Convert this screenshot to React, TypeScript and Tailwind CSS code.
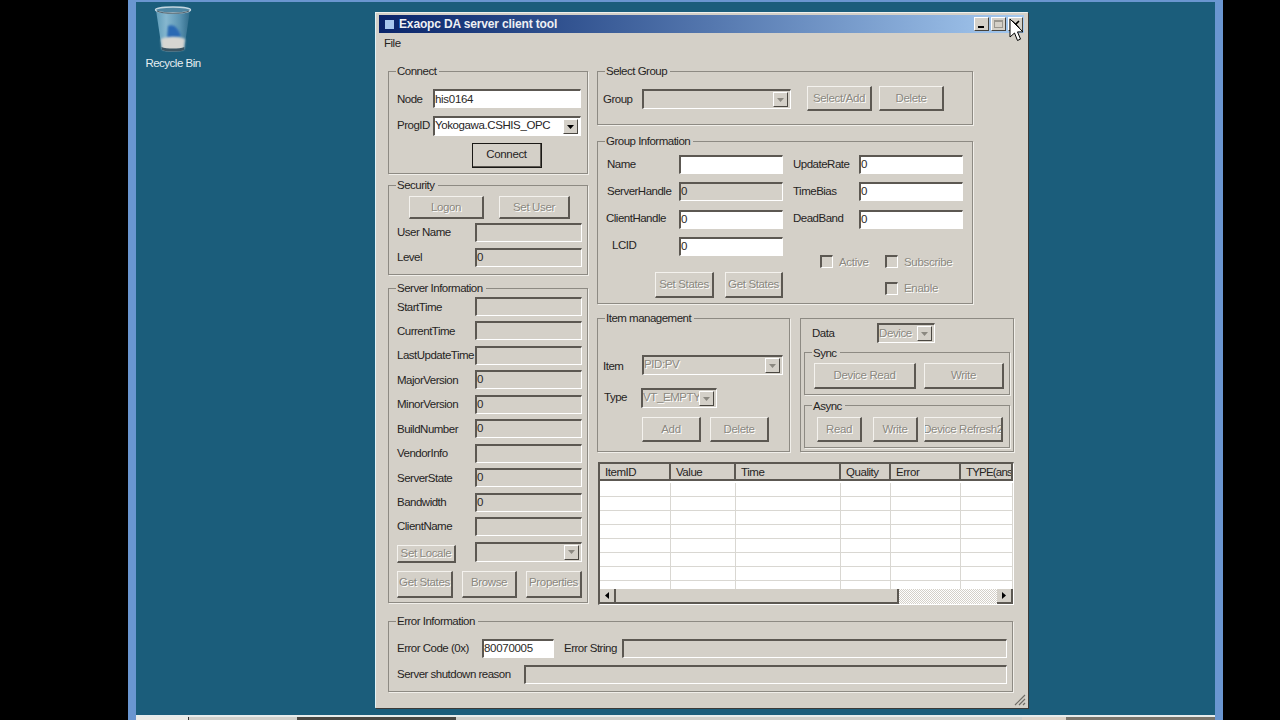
import React from 'react';

const FONT = "font-['Liberation_Sans',Arial,sans-serif]";
const DOWN = 'border-t-2 border-l-2 border-t-[#5c5852] border-l-[#5c5852] border-r border-b border-r-white border-b-white';

function Label({ children, className = '' }: { children: React.ReactNode; className?: string }) {
  return <span className={`text-[11.5px] leading-[14px] tracking-[-0.5px] text-[#26241f] whitespace-nowrap ${className}`}>{children}</span>;
}

function Input({ value = '', off = false, className = '' }: { value?: string; off?: boolean; className?: string }) {
  return (
    <div className={`h-[19px] text-[11.5px] leading-[15px] tracking-[-0.3px] text-[#2b2925] overflow-hidden whitespace-nowrap ${DOWN} ${off ? 'bg-[#d4d0c8]' : 'bg-white'} ${className}`}>
      {value}
    </div>
  );
}

function Arrow({ off = false }: { off?: boolean }) {
  return (
    <div className="absolute right-[2px] top-[1px] bottom-[1px] w-[15px] flex items-center justify-center bg-[#d4d0c8] border-t border-l border-t-white border-l-white border-r border-b border-r-[#4a4741] border-b-[#4a4741]">
      <svg width="7" height="4" viewBox="0 0 7 4"><path d="M0 0h7L3.5 4z" fill={off ? '#8b8880' : '#000'} /></svg>
    </div>
  );
}

function Select({ value = '', off = false, className = '' }: { value?: string; off?: boolean; className?: string }) {
  return (
    <div className={`relative h-[20px] text-[11.5px] leading-[15px] tracking-[-0.4px] overflow-hidden whitespace-nowrap ${DOWN} ${off ? 'bg-[#d4d0c8] text-[#8b8880] [text-shadow:1px_1px_0_#fff]' : 'bg-white text-[#26241f]'} ${className}`}>
      {value}
      <Arrow off={off} />
    </div>
  );
}

function Btn({ children, off = true, className = '' }: { children: React.ReactNode; off?: boolean; className?: string }) {
  return (
    <div className={`flex items-center justify-center overflow-hidden whitespace-nowrap text-[11.5px] tracking-[-0.35px] bg-[#d4d0c8] border-t border-l border-t-[#f4f2ee] border-l-[#f4f2ee] border-r-2 border-b-2 border-r-[#5c5852] border-b-[#5c5852] ${off ? 'text-[#8b8880] [text-shadow:1px_1px_0_#fff]' : 'text-[#26241f]'} ${className}`}>
      {children}
    </div>
  );
}

function Group({ title, titleTop = '-top-[8px]', className = '', children }: { title?: string; titleTop?: string; className?: string; children: React.ReactNode }) {
  return (
    <div className={`relative border border-[#8d8a83] shadow-[1px_1px_0_#f1efea] ${className}`}>
      {title && <span className={`absolute ${titleTop} left-[7px] px-[1px] pr-[3px] bg-[#d4d0c8] text-[11.5px] leading-[14px] tracking-[-0.5px] text-[#26241f] whitespace-nowrap`}>{title}</span>}
      {children}
    </div>
  );
}

function Check({ label, className = '' }: { label: string; className?: string }) {
  return (
    <div className={`flex items-center gap-[6px] ${className}`}>
      <div className={`w-[13px] h-[13px] bg-[#d4d0c8] ${DOWN}`} />
      <span className="text-[11.5px] leading-[14px] tracking-[-0.3px] text-[#8b8880] [text-shadow:1px_1px_0_#fff]">{label}</span>
    </div>
  );
}

const serverRows = [
  ['StartTime', ''],
  ['CurrentTime', ''],
  ['LastUpdateTime', ''],
  ['MajorVersion', '0'],
  ['MinorVersion', '0'],
  ['BuildNumber', '0'],
  ['VendorInfo', ''],
  ['ServerState', '0'],
  ['Bandwidth', '0'],
  ['ClientName', ''],
];

const columns = [
  { name: 'ItemID', w: 'w-[71px]', track: 'tracking-[-0.45px]' },
  { name: 'Value', w: 'w-[65px]', track: 'tracking-[-0.45px]' },
  { name: 'Time', w: 'w-[105px]', track: 'tracking-[-0.45px]' },
  { name: 'Quality', w: 'w-[50px]', track: 'tracking-[-0.45px]' },
  { name: 'Error', w: 'w-[70px]', track: 'tracking-[-0.45px]' },
  { name: 'TYPE(ans', w: 'flex-1', track: 'tracking-[-0.8px]' },
];

function ItemTable() {
  return (
    <div className={`ml-[1px] mt-[10px] w-[416px] h-[143px] flex flex-col overflow-hidden bg-white ${DOWN}`}>
      <div className="flex h-[17px] shrink-0 border-b-2 border-b-[#5c5852]">
        {columns.map((c) => (
          <div key={c.name} className={`${c.w} ${c.track} bg-[#d4d0c8] pl-[5px] text-[11.5px] leading-[16px] text-[#26241f] border-r-2 border-r-[#5c5852] overflow-hidden whitespace-nowrap`}>
            {c.name}
          </div>
        ))}
      </div>
      <div className="flex-1 overflow-hidden pt-[2px]">
        {[0, 1, 2, 3, 4, 5, 6, 7].map((r) => (
          <div key={r} className="flex h-[14px] border-b border-b-[#d9d7d2]">
            {columns.map((c) => (
              <div key={c.name} className={`${c.w} border-r border-r-[#d9d7d2]`} />
            ))}
          </div>
        ))}
      </div>
      <div className="flex h-[15px] shrink-0">
        <div className="w-[16px] flex items-center justify-center bg-[#d4d0c8] border-r-2 border-b-2 border-r-[#5c5852] border-b-[#5c5852]">
          <svg width="4" height="7" viewBox="0 0 4 7"><path d="M4 0v7L0 3.5z" fill="#000" /></svg>
        </div>
        <div className="w-[283px] bg-[#d4d0c8] border-r-2 border-b-2 border-r-[#5c5852] border-b-[#5c5852]" />
        <div className="flex-1 bg-[repeating-conic-gradient(#ffffff_0_25%,#d4d0c8_0_50%)] bg-[length:2px_2px]" />
        <div className="w-[16px] flex items-center justify-center bg-[#d4d0c8] border-r-2 border-b-2 border-r-[#5c5852] border-b-[#5c5852]">
          <svg width="4" height="7" viewBox="0 0 4 7"><path d="M0 0v7l4-3.5z" fill="#000" /></svg>
        </div>
      </div>
    </div>
  );
}

function RecycleBin() {
  return (
    <div className="absolute left-[146px] top-[6px] w-[54px] flex flex-col items-center">
      <svg width="38" height="46" viewBox="0 0 38 46">
        <defs>
          <linearGradient id="bin" x1="0" x2="1" y1="0" y2="0">
            <stop offset="0" stopColor="#5f9cb8" />
            <stop offset="0.3" stopColor="#86b7cf" />
            <stop offset="0.7" stopColor="#5b94b2" />
            <stop offset="1" stopColor="#2f6a88" />
          </linearGradient>
          <filter id="soft"><feGaussianBlur stdDeviation="1" /></filter>
        </defs>
        <path d="M2 4 8 44c3 2 19 2 22 0L36 4z" fill="url(#bin)" />
        <path d="M14 20c5-3 11 2 13 11l-14 2z" fill="#2a69b4" filter="url(#soft)" />
        <path d="M7 33c6-3 18-3 24 0l-1 10c-4 2-18 2-22 0z" fill="#d6d6d2" filter="url(#soft)" />
        <path d="M8 44c4 2 18 2 22 0l.4-3c-5 2-18 2-23 0z" fill="#3b5563" />
        <ellipse cx="19" cy="4" rx="17.5" ry="3" fill="#4f86a2" stroke="#c3d6e0" strokeWidth="1.4" />
        <path d="M3 5c6 3 26 3 32 0" fill="none" stroke="#53656f" strokeWidth="1.2" />
      </svg>
      <span className="mt-[4px] text-[11.5px] leading-[14px] tracking-[-0.5px] text-[#e6eef2] whitespace-nowrap">Recycle Bin</span>
    </div>
  );
}

function CaptionBtn({ children, className = '' }: { children: React.ReactNode; className?: string }) {
  return (
    <div className={`w-[15px] h-[14px] flex items-center justify-center bg-[#d4d0c8] border-t border-l border-t-white border-l-white border-r border-b border-r-[#45423c] border-b-[#45423c] ${className}`}>
      {children}
    </div>
  );
}

function Dialog() {
  return (
    <div className="absolute left-[375px] top-[12px] w-[653px] h-[696px] flex flex-col bg-[#d4d0c8] border border-t-[#eef0ee] border-l-[#dff1f6] border-r-[#d4d0c8] border-b-[#d4d0c8] px-[3px] pt-[2px] pb-[1px] shadow-[1px_1px_0_#3b3a38]">
      {/* Title bar */}
      <div className="h-[18px] shrink-0 flex items-center bg-gradient-to-r from-[#0a246a] to-[#a6caf0] pl-[6px] pr-[1px]">
        <div className="w-[9px] h-[9px] bg-[#a9c8ee] mr-[5px]" />
        <span className="text-[12px] leading-[14px] font-bold tracking-[-0.15px] text-[#eef0f4] whitespace-nowrap -mt-[1px]">Exaopc DA server client tool</span>
        <div className="ml-auto flex items-center">
          <CaptionBtn><div className="w-[6px] h-[2px] bg-black mt-[6px] -ml-[2px]" /></CaptionBtn>
          <CaptionBtn className="ml-[2px]"><div className="w-[9px] h-[8px] border border-[#9a9790] border-t-2" /></CaptionBtn>
          <CaptionBtn className="ml-[2px]">
            <svg width="9" height="9" viewBox="0 0 9 9"><path d="M1 1l7 7M8 1L1 8" stroke="#000" strokeWidth="1.6" /></svg>
          </CaptionBtn>
        </div>
      </div>

      {/* Menu */}
      <div className="h-[19px] shrink-0 flex items-start pl-[5px] pt-[3px]"><Label>File</Label></div>

      {/* Client area */}
      <div className="flex-1 relative pl-[9px] pt-[19px]">
        <div className="flex gap-[9px]">
          <div className="w-[200px] flex flex-col">
            <Group title="Connect" className="h-[103px] pl-[8px] pt-[17px] pr-[5px]">
              <div className="flex items-center h-[19px]">
                <Label className="w-[36px]">Node</Label>
                <Input value="his0164" className="w-[148px] leading-[16px]" />
              </div>
              <div className="flex items-center mt-[8px]">
                <Label className="w-[36px] -mt-[2px]">ProgID</Label>
                <Select value="Yokogawa.CSHIS_OPC" className="w-[148px]" />
              </div>
              <div className="flex mt-[7px] pl-[75px]">
                <Btn off={false} className="w-[70px] h-[25px] outline outline-1 outline-[#1a1916] -outline-offset-1">Connect</Btn>
              </div>
            </Group>

            <Group title="Security" className="mt-[11px] h-[90px] pl-[8px] pt-[10px] pr-[5px]">
              <div className="flex pl-[12px] gap-[15px]">
                <Btn className="w-[75px] h-[23px] pt-[1px]">Logon</Btn>
                <Btn className="w-[71px] h-[23px] pt-[1px]">Set User</Btn>
              </div>
              <div className="flex items-center mt-[4px]">
                <Label className="w-[78px] -mt-[2px]">User Name</Label>
                <Input off className="w-[107px]" />
              </div>
              <div className="flex items-center mt-[6px]">
                <Label className="w-[78px] -mt-[2px]">Level</Label>
                <Input off value="0" className="w-[107px]" />
              </div>
            </Group>

            <Group title="Server Information" className="mt-[13px] h-[315px] pl-[8px] pt-[8px] pr-[5px]">
              <div className="flex flex-col gap-[5.44px]">
                {serverRows.map(([name, val]) => (
                  <div key={name} className="flex items-center">
                    <Label className="w-[78px]">{name}</Label>
                    <Input off value={val} className="w-[107px]" />
                  </div>
                ))}
              </div>
              <div className="flex mt-[6px] justify-between items-start">
                <Btn className="w-[59px] h-[18px] mt-[3px]">Set Locale</Btn>
                <Select off className="w-[107px] h-[19px]" />
              </div>
              <div className="flex mt-[8px] gap-[9px]">
                <Btn className="w-[56px] h-[27px] pb-[2px]">Get States</Btn>
                <Btn className="w-[55px] h-[27px] pb-[2px]">Browse</Btn>
                <Btn className="w-[56px] h-[27px] pb-[2px]">Properties</Btn>
              </div>
            </Group>
          </div>

          <div className="flex flex-col">
            <Group title="Select Group" className="w-[376px] h-[54px] flex items-start pl-[5px] pt-[14px]">
              <Label className="w-[39px] mt-[6px]">Group</Label>
              <Select off className="w-[149px] mt-[3px]" />
              <Btn className="w-[65px] h-[25px] ml-[16px] pt-[1px]">Select/Add</Btn>
              <Btn className="w-[65px] h-[25px] ml-[7px] pt-[1px]">Delete</Btn>
            </Group>

            <Group title="Group Information" className="mt-[16px] w-[376px] h-[163px] flex pt-[13px]">
              <div className="w-[185px] flex flex-col gap-[8.3px]">
                {[
                  ['Name', '', false, 'pl-[9px]'],
                  ['ServerHandle', '0', true, 'pl-[9px]'],
                  ['ClientHandle', '0', false, 'pl-[8px]'],
                  ['LCID', '0', false, 'pl-[14px]'],
                ].map(([name, val, off, pad]) => (
                  <div key={name as string} className="flex items-center">
                    <Label className={`w-[81px] -mt-[2px] ${pad}`}>{name}</Label>
                    <Input value={val as string} off={off as boolean} className="w-[104px]" />
                  </div>
                ))}
                <div className="flex justify-end gap-[11px] mt-[8px]">
                  <Btn className="w-[59px] h-[26px]">Set States</Btn>
                  <Btn className="w-[58px] h-[26px]">Get States</Btn>
                </div>
              </div>
              <div className="ml-[10px] w-[170px] flex flex-col gap-[8.3px]">
                {['UpdateRate', 'TimeBias', 'DeadBand'].map((name) => (
                  <div key={name} className="flex items-center">
                    <Label className="w-[66px] -mt-[2px]">{name}</Label>
                    <Input value="0" className="w-[104px]" />
                  </div>
                ))}
                <div className="flex mt-[18px] pl-[27px]">
                  <Check label="Active" className="w-[65px]" />
                  <Check label="Subscribe" />
                </div>
                <Check label="Enable" className="pl-[92px] mt-[4px]" />
              </div>
            </Group>

            <div className="flex mt-[14px] gap-[10px]">
              <Group title="Item management" className="w-[193px] h-[134px] pl-[5px] pt-[36px]">
                <div className="flex items-center">
                  <Label className="w-[39px] mt-[2px]">Item</Label>
                  <Select off value="PID:PV" className="w-[141px]" />
                </div>
                <div className="flex items-center mt-[13px]">
                  <Label className="w-[38px] pl-[1px] -mt-[3px]">Type</Label>
                  <Select off value="VT_EMPTY" className="w-[76px]" />
                </div>
                <div className="flex gap-[9px] pl-[39px] mt-[9px]">
                  <Btn className="w-[59px] h-[25px] pt-[1px]">Add</Btn>
                  <Btn className="w-[59px] h-[25px] pt-[1px]">Delete</Btn>
                </div>
              </Group>

              <Group className="w-[214px] h-[134px] pl-[3px] pt-[4px]">
                <div className="flex items-center h-[20px] pl-[8px]">
                  <Label className="w-[65px]">Data</Label>
                  <Select off value="Device" className="w-[58px] pt-[1px]" />
                </div>
                <Group title="Sync" titleTop="-top-[7px]" className="mt-[9px] w-[206px] h-[43px] flex gap-[8px] pl-[9px] pt-[10px]">
                  <Btn className="w-[102px] h-[26px]">Device Read</Btn>
                  <Btn className="w-[80px] h-[26px]">Write</Btn>
                </Group>
                <Group title="Async" titleTop="-top-[7px]" className="mt-[10px] w-[206px] h-[43px] flex pl-[12px] pt-[11px]">
                  <Btn className="w-[45px] h-[25px] pt-[1px]">Read</Btn>
                  <Btn className="w-[45px] h-[25px] ml-[11px] pt-[1px]">Write</Btn>
                  <Btn className="w-[79px] h-[25px] ml-[6px] pt-[1px]">Device Refresh2</Btn>
                </Group>
              </Group>
            </div>

            <ItemTable />
          </div>
        </div>

        <Group title="Error Information" className="mt-[16px] w-[625px] h-[71px] pl-[8px] pt-[17px]">
          <div className="flex items-center">
            <Label className="w-[85px] -mt-[2px]">Error Code (0x)</Label>
            <Input value="80070005" className="w-[72px]" />
            <Label className="ml-[10px] w-[58px] -mt-[2px]">Error String</Label>
            <Input off className="w-[385px]" />
          </div>
          <div className="flex items-center mt-[7px]">
            <Label className="w-[127px] -mt-[2px]">Server shutdown reason</Label>
            <Input off className="w-[483px]" />
          </div>
        </Group>

        <svg className="absolute -right-[2px] bottom-[0px]" width="12" height="12" viewBox="0 0 12 12">
          <path d="M11 1 1 11M11 5 5 11M11 9 9 11" stroke="#6f6c66" strokeWidth="1.2" />
        </svg>
      </div>
    </div>
  );
}

export default function App() {
  return (
    <div className={`relative w-[1280px] h-[720px] overflow-hidden bg-black ${FONT}`}>
      {/* Screen frame */}
      <div className="absolute left-[128px] top-0 w-[1095px] h-[720px] flex flex-col bg-[#6a96d0] px-[8px] pt-[2px]">
        <div className="flex-1 bg-[#1b5d7b]" />
        <div className="h-[2px] bg-[#e7ecec]" />
        <div className="h-[3px] flex bg-[#d0cfca]">
          <div className="w-[53px] bg-[#ecebe6] border-r border-r-[#333]" />
          <div className="w-[108px]" />
          <div className="w-[159px] bg-[#4a4843]" />
          <div className="w-[566px]" />
          <div className="w-[44px] bg-[#ddd3c8]" />
          <div className="flex-1 bg-[#7a756c]" />
        </div>
      </div>
      <RecycleBin />
      <Dialog />
      {/* Mouse pointer */}
      <svg className="absolute left-[1009px] top-[18px]" width="16" height="25" viewBox="0 0 16 25">
        <path d="M1 1v18l4.5-4 3 7.5 3-1.4-3-7.2H14z" fill="#fff" stroke="#000" strokeWidth="1" />
      </svg>
    </div>
  );
}
